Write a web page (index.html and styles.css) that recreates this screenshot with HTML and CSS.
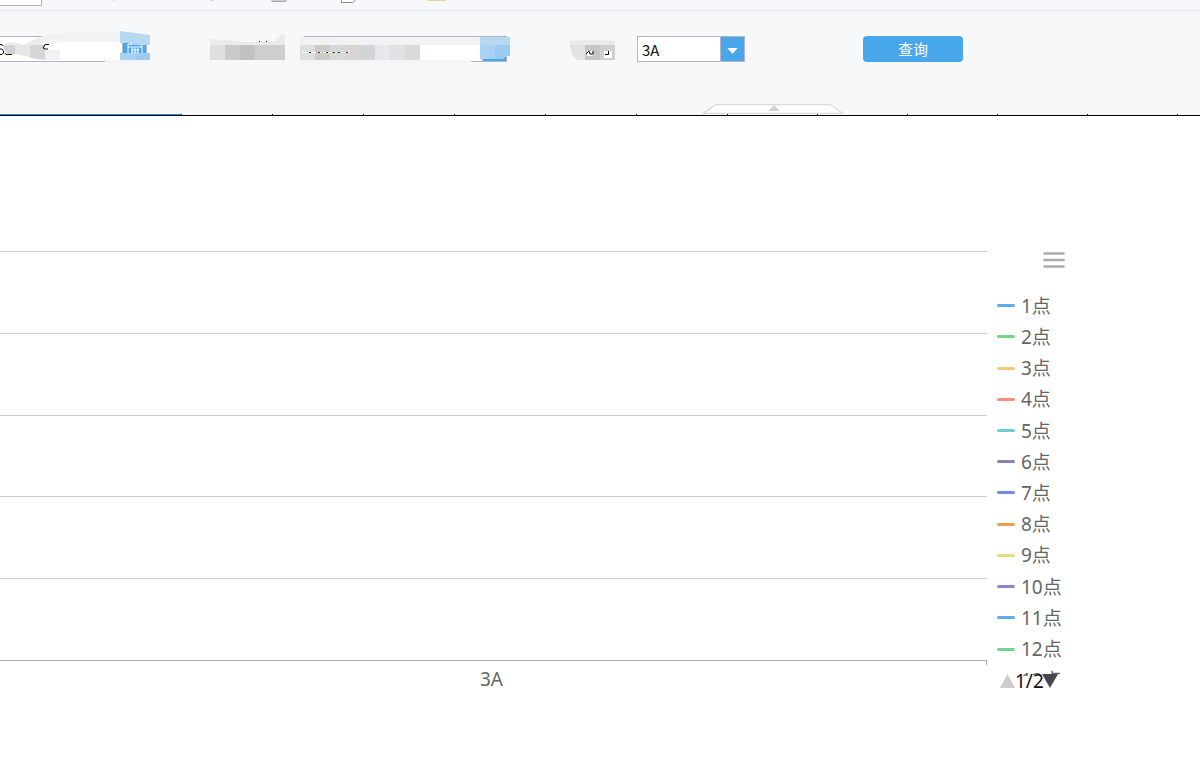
FILE: index.html
```html
<!DOCTYPE html>
<html lang="zh-CN">
<head>
    <meta charset="UTF-8">
    <meta name="viewport" content="width=device-width, initial-scale=1.0">
    <title>查询</title>
    <link rel="stylesheet" href="styles.css">
</head>
<body>

<header class="toolbar">
    <div class="search-end"></div>
    <svg class="tool-icons" width="410" height="10" viewBox="0 0 410 10">
        <path d="M70 0h3M157 0h3" stroke="#e6e8ee" stroke-width="2"/>
        <path d="M168 0h4" stroke="#c3daf3" stroke-width="2"/>
        <path d="M230 0v1.500h14V0" fill="#ccc" stroke="#aaa"/>
        <path d="M299.500 0v2.500h11l3-2.500" fill="#fff" stroke="#888"/>
        <path d="M386 0h18" stroke="#f5cf98" stroke-width="2"/>
    </svg>
</header>

<form class="filters" onsubmit="return false">
    <div class="fields">
        <div class="field date">
            <input type="text" aria-label="日期">
            <button type="button" class="pick" aria-label="选择日期">
                <svg width="16" height="14" viewBox="0 0 16 14">
                    <path d="M1 2h14v11H1zM1 5h14M4 8h8M4 11h8M5 6v7M8 6v7M11 6v7M4 0v3M12 0v3" fill="none" stroke="#fff"/>
                </svg>
            </button>
            <svg class="mask" width="150" height="32" viewBox="0 0 150 32">
                <path d="M0 13.500h2l1 1.500M0 18h2l1.500 2v2L2 23.500H0M5 22l1 1.500h6" fill="none" stroke="#111"/>
                <path d="M40 7q6-5 20-5l60-1v10H60l-15 4-5 2H28z" fill="#f1f2f4"/>
                <path d="M3 14q8-6 20 0l17-8v10H3z" fill="#ebecee"/>
                <path d="M3 14h12v9H8q-5-4-5-9z" fill="#d1d2d6"/>
                <path d="M15 14h15v12l-15-3z" fill="#e6e6e4"/>
                <path d="M30 14h15v15l-15-2z" fill="#d6d6d6"/>
                <path d="M45 19h15v10H45z" fill="#f0f1f2"/>
                <path d="M49 13.500h-4L43 17l2 1h3" fill="none" stroke="#111"/>
                <path d="M105 29h45v3h-45z" fill="#f1f3f6"/>
                <path d="M120 0l30 4v10h-10l-3-2h-17z" fill="#b6d8f0"/>
                <path d="M120 22h15v7h-15z" fill="#a8d1f3"/>
                <path d="M135 22h15v7h-15z" fill="#9bcbef"/>
            </svg>
        </div>

        <svg class="label-wide" width="75" height="26" viewBox="0 0 75 26">
            <path d="M0 3l15 1 20 2h30q1-7 10-7v12H0z" fill="#e9eaec"/>
            <path d="M0 9h15v15H0z" fill="#dedfe1"/>
            <path d="M15 9h15v15H15z" fill="#cacacc"/>
            <path d="M30 9h15v15H30z" fill="#c2c2c4"/>
            <path d="M45 9h30v15H45z" fill="#cfcfd1"/>
            <path d="M49 5h1v1h-1zM56 5h1v1h-1z" fill="#000"/>
        </svg>

        <div class="field station">
            <input type="text" aria-label="站点">
            <button type="button" class="pick" aria-label="选择站点"></button>
            <svg class="mask" width="210" height="32" viewBox="0 0 210 32">
                <path d="M0 5h4v1h36v1h140v7H0z" fill="#f1f2f4"/>
                <path d="M0 14h15v15H0z" fill="#dedfe1"/>
                <path d="M15 14h15v15H15z" fill="#cdcbc8"/>
                <path d="M30 14h15v15H30z" fill="#d6d9da"/>
                <path d="M45 14h15v15H45z" fill="#d8d5d2"/>
                <path d="M60 14h15v15H60z" fill="#d3d4d8"/>
                <path d="M75 14h15v15H75z" fill="#e8e8ea"/>
                <path d="M90 14h15v15H90z" fill="#e0e1e2"/>
                <path d="M105 14h15v15h-15z" fill="#d9dbda"/>
                <path d="M0 29h171v3H0z" fill="#f3f4f8"/>
                <path d="M2 21.500h50" stroke="#fff"/>
                <path d="M9 21.500h2M18 21.500h2M26 21.500h2M33 21.500h2M38 21.500h2M46 21.500h2" stroke="#333"/>
                <path d="M16 21.500h1M22 21.500h1M32 21.500h1M37 21.500h1M51 21.500h1" stroke="#d9902e"/>
                <path d="M180 6h30v8h-30z" fill="#b6d8f0"/>
                <path d="M180 14h15v14h-15z" fill="#a8d1f3"/>
                <path d="M195 14h15v11h-3l-4 3h-8z" fill="#9bcbef"/>
            </svg>
        </div>

        <svg class="label-short" width="45" height="26" viewBox="0 0 45 26">
            <path d="M0 5l15-1h15l15 1v5H0z" fill="#e9eaec"/>
            <path d="M0 9h15v15H7q-7-6-7-15z" fill="#e2e3e5"/>
            <path d="M15 9h15v15H15z" fill="#c6c6c8"/>
            <path d="M30 9h15v15H30z" fill="#cfcfd1"/>
            <path d="M17 15h6v5h-6zM34 15h8v7h-8z" fill="#fff"/>
            <path d="M16 18l3-3 1 3h3v-3M38.500 15v3.500H35" fill="none" stroke="#000"/>
        </svg>

        <div class="field series">
            <select aria-label="相别">
                <option>3A</option>
                <option>3B</option>
                <option>3C</option>
            </select>
            <svg class="arrow" width="24" height="24" viewBox="0 0 24 24">
                <path d="M6.500 11h11L12 17z" fill="#fff"/>
            </svg>
        </div>

        <button type="submit" class="query">查询</button>
    </div>

    <button type="button" class="collapse" aria-label="收起">
        <svg width="142" height="10" viewBox="0 0 142 10">
            <path d="M1 9.500L14 .5h114l13 9z" fill="#fff" stroke="#dadada" stroke-width="1.300"/>
            <path d="M66 7l6-6 6 6z" fill="#d5d5d7"/>
        </svg>
    </button>
</form>

<nav class="tabs">
    <span class="active"></span>
    <span></span>
    <span></span>
    <span></span>
    <span></span>
    <span></span>
    <span></span>
    <span></span>
    <span></span>
    <span></span>
    <span></span>
    <span></span>
</nav>

<main class="chart">
    <section class="plot">
        <div class="grid">
            <div></div>
            <div></div>
            <div></div>
            <div></div>
            <div></div>
        </div>
        <div class="axis">3A</div>
    </section>

    <aside class="side">
        <button type="button" class="menu" aria-label="菜单">
            <svg width="22" height="18" viewBox="0 0 22 18">
                <path d="M1.500 2.500h19M1.500 9h19M1.500 15.500h19" stroke="#aaa" stroke-width="2.600" stroke-linecap="round"/>
            </svg>
        </button>
        <div class="legend">
            <ul>
                <li class="blue">1点</li>
                <li class="green">2点</li>
                <li class="amber">3点</li>
                <li class="red">4点</li>
                <li class="teal">5点</li>
                <li class="plum">6点</li>
                <li class="indigo">7点</li>
                <li class="orange">8点</li>
                <li class="yellow">9点</li>
                <li class="violet">10点</li>
                <li class="blue">11点</li>
                <li class="green">12点</li>
                <li class="none">13点</li>
            </ul>
        </div>
        <div class="pager">
            <button type="button" aria-label="上一页">
                <svg width="15" height="14" viewBox="0 0 15 14"><path d="M0 14L7.500 0 15 14z" fill="#ccc"/></svg>
            </button>
            <span>1/2</span>
            <button type="button" aria-label="下一页">
                <svg width="16" height="14" viewBox="0 0 16 14"><path d="M0 0h16L8 14z" fill="#48484c"/></svg>
            </button>
        </div>
    </aside>
</main>

</body>
</html>
```
FILE: styles.css
```css
* {
    box-sizing: border-box;
}
body {
    margin: 0;
    background: #fff;
    color: #666;
    font-family: "Noto Sans", "Noto Sans CJK SC", sans-serif;
    font-size: 19px;
    overflow-x: hidden;
}
button {
    padding: 0;
    border: none;
    background: none;
    font-family: inherit;
    cursor: pointer;
}
svg {
    display: block;
    flex: none;
}

/* toolbar */
.toolbar {
    display: flex;
    height: 11px;
    background: #f7f8fa;
    border-bottom: 1px solid #e8e8ec;
}
.search-end {
    width: 42px;
    height: 6px;
    background: #fff;
    border: 1px solid #b3b5c9;
    border-width: 0 1px 1px 0;
}

/* filters */
.filters {
    height: 103px;
    padding-top: 25px;
    background: #f7f8fa;
}
.fields {
    display: flex;
    height: 68px;
}
.field {
    position: relative;
    display: flex;
    height: 26px;
}
.field input {
    flex: 1;
    min-width: 0;
    padding: 0 4px;
    background: #fff;
    border: 1px solid #b3b5c9;
    border-right: none;
    outline: none;
}
.pick {
    display: flex;
    align-items: center;
    justify-content: center;
    width: 25px;
    background: #48a7ea;
    border: 1px solid #b3b5c9;
}
.mask {
    position: absolute;
    left: 0;
    top: -5px;
    pointer-events: none;
}
.date {
    width: 150px;
    padding-right: 3px;
}
.date input {
    border-left: none;
}
.label-wide {
    margin-left: 60px;
    overflow: visible;
}
.station {
    width: 210px;
    margin-left: 15px;
    padding-right: 3px;
}
.label-short {
    margin-left: 60px;
}
.series {
    width: 108px;
    margin-left: 22px;
}
.series select {
    width: 100%;
    padding: 0 4px;
    appearance: none;
    background: #fff;
    border: 1px solid #b3b5c9;
    border-radius: 0;
    color: #111;
    font-family: "Noto Sans CJK SC", sans-serif;
    font-size: 15px;
}
.arrow {
    position: absolute;
    top: 1px;
    right: 1px;
    background: #48a7ea;
    border-left: 1px solid #b3b5c9;
    pointer-events: none;
}
.query {
    width: 100px;
    height: 26px;
    margin-left: 118px;
    padding-bottom: 2px;
    background: #48a7ea;
    border-radius: 4px;
    color: #fff;
    font-size: 15px;
}
.collapse {
    display: block;
    margin-left: 702px;
}

/* tabs */
.tabs {
    display: flex;
    height: 2px;
    background: #f7f8fa;
    border-bottom: 1px solid #000;
}
.tabs span {
    flex: none;
    width: 91px;
    border-right: 1px solid #000;
}
.tabs span:nth-child(n+8) {
    width: 90px;
}
.tabs .active {
    width: 182px;
    background: #00a2e8;
}

/* chart */
.chart {
    display: flex;
    padding-top: 135px;
}
.plot {
    flex: 1;
}
.grid {
    display: grid;
    grid-template-rows: repeat(5, 1fr);
    height: 410px;
    border-bottom: 1px solid #aaa;
}
.grid div {
    border-top: 1px solid #ccc;
}
.axis {
    height: 36px;
    padding-right: 4px;
    line-height: 36px;
    text-align: center;
    background: linear-gradient(#aaa, #aaa) right top / 1px 4px no-repeat;
}
.side {
    width: 213px;
    padding-left: 10px;
}
.menu {
    display: block;
    margin-left: 46px;
}
.legend {
    height: 386px;
    margin-top: 21px;
    overflow: hidden;
}
.legend ul {
    display: grid;
    grid-template-rows: repeat(13, 1fr);
    height: 406px;
    margin: 0;
    padding: 0;
    list-style: none;
}
.legend li {
    display: flex;
    align-items: center;
    gap: 6px;
    line-height: 30px;
}
.legend li::before {
    content: "";
    width: 18px;
    height: 3px;
    border-radius: 2px;
    background: currentColor;
}
.blue::before { color: #5cacee; }
.green::before { color: #70d68b; }
.amber::before { color: #fbc672; }
.red::before { color: #fb8a7e; }
.teal::before { color: #6ed0cf; }
.plum::before { color: #8d80b0; }
.indigo::before { color: #6a8ee0; }
.orange::before { color: #eba050; }
.yellow::before { color: #edda7c; }
.violet::before { color: #9580d0; }
.legend .none::before { background: none; }
.pager {
    display: flex;
    align-items: center;
    height: 26px;
    margin-top: -8px;
    padding-left: 3px;
    color: #111;
    line-height: 26px;
}
.pager button:last-child {
    margin-left: -2px;
}
```
